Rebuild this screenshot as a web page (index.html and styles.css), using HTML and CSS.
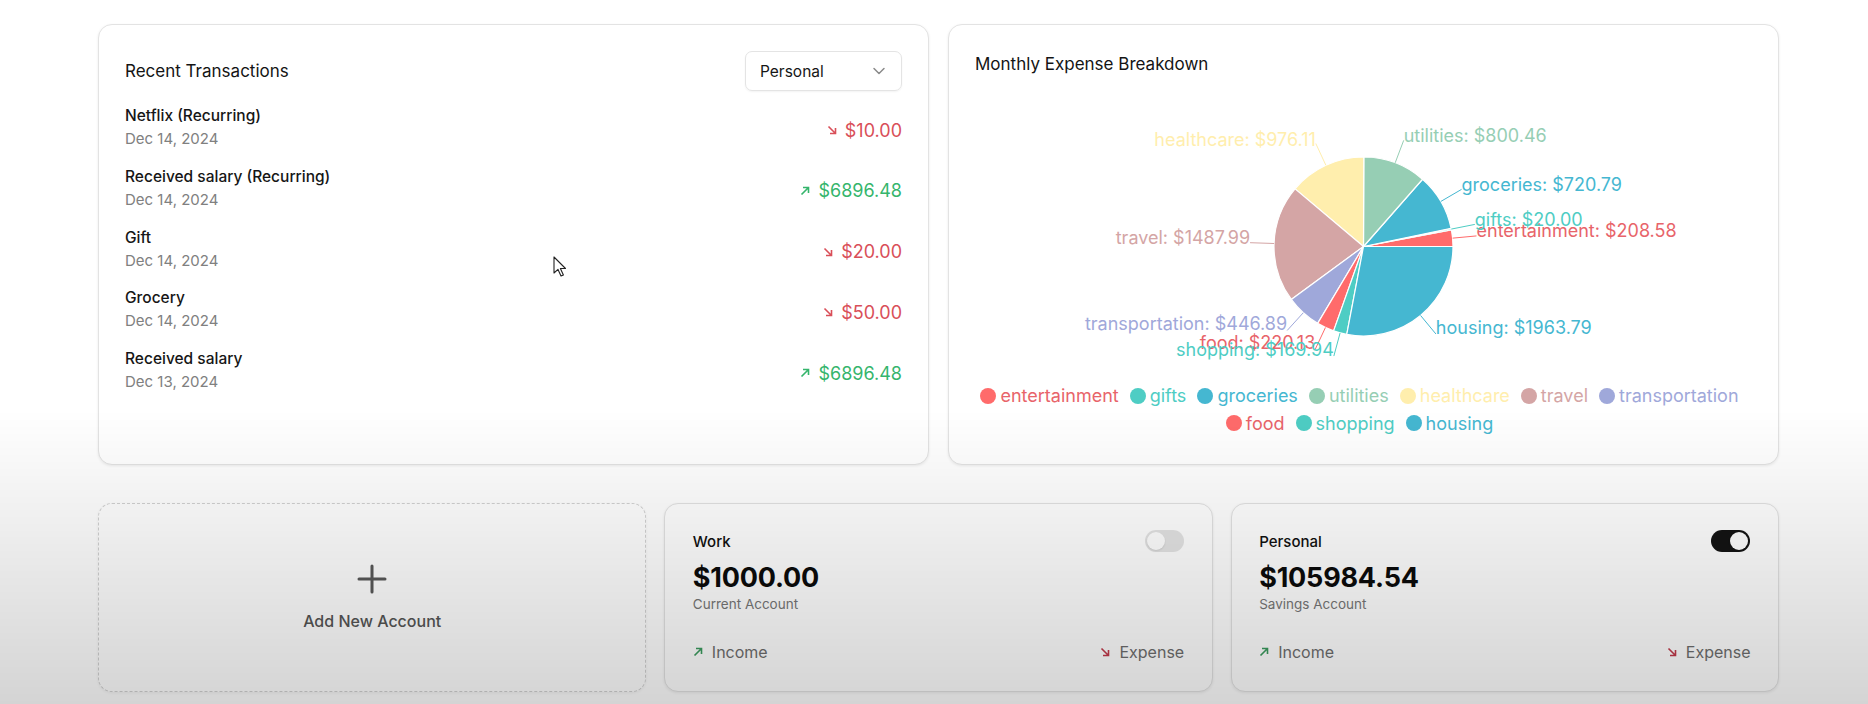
FILE: index.html
```html
<!DOCTYPE html>
<html lang="en">
<head>
<meta charset="utf-8">
<title>Dashboard</title>
<link rel="stylesheet" href="styles.css">
</head>
<body>
<main class="page">
  <section class="top-row">
    <div class="card tx-card">
      <div class="card-head">
        <h2 class="card-title">Recent Transactions</h2>
        <div class="select">
          <span>Personal</span>
          <svg class="chev" width="20" height="20" viewBox="0 0 24 24"><path d="m6 9 6 6 6-6" fill="none" stroke="#8a8a8a" stroke-width="1.8" stroke-linecap="round" stroke-linejoin="round"/></svg>
        </div>
      </div>
      <ul class="tx-list">
        <li class="tx">
          <div class="tx-info"><div class="tx-name">Netflix (Recurring)</div><div class="tx-date">Dec 14, 2024</div></div>
          <div class="tx-amt neg"><svg class="arr" viewBox="0 0 10 10"><path d="M1.5 1.5 8.5 8.5M8.5 3v5.5H3"/></svg>$10.00</div>
        </li>
        <li class="tx">
          <div class="tx-info"><div class="tx-name">Received salary (Recurring)</div><div class="tx-date">Dec 14, 2024</div></div>
          <div class="tx-amt pos"><svg class="arr" viewBox="0 0 10 10"><path d="M1.5 8.5 8.5 1.5M3 1.5h5.5V7"/></svg>$6896.48</div>
        </li>
        <li class="tx">
          <div class="tx-info"><div class="tx-name">Gift</div><div class="tx-date">Dec 14, 2024</div></div>
          <div class="tx-amt neg"><svg class="arr" viewBox="0 0 10 10"><path d="M1.5 1.5 8.5 8.5M8.5 3v5.5H3"/></svg>$20.00</div>
        </li>
        <li class="tx">
          <div class="tx-info"><div class="tx-name">Grocery</div><div class="tx-date">Dec 14, 2024</div></div>
          <div class="tx-amt neg"><svg class="arr" viewBox="0 0 10 10"><path d="M1.5 1.5 8.5 8.5M8.5 3v5.5H3"/></svg>$50.00</div>
        </li>
        <li class="tx">
          <div class="tx-info"><div class="tx-name">Received salary</div><div class="tx-date">Dec 13, 2024</div></div>
          <div class="tx-amt pos"><svg class="arr" viewBox="0 0 10 10"><path d="M1.5 8.5 8.5 1.5M3 1.5h5.5V7"/></svg>$6896.48</div>
        </li>
      </ul>
    </div>

    <div class="card chart-card">
      <h2 class="card-title">Monthly Expense Breakdown</h2>
      <svg class="pie" viewBox="0 0 777 294" width="777" height="294">
        <g transform="translate(388.5,158.5)" stroke="#fff" stroke-width="1.2">
          <path fill="#FF6B6B" d="M0 0L89.5 0A89.5 89.5 0 0 0 87.94 -16.62Z"/>
          <path fill="#4ECDC4" d="M0 0L87.94 -16.62A89.5 89.5 0 0 0 87.63 -18.20Z"/>
          <path fill="#45B7D1" d="M0 0L87.63 -18.20A89.5 89.5 0 0 0 59.04 -67.26Z"/>
          <path fill="#96CEB4" d="M0 0L59.04 -67.26A89.5 89.5 0 0 0 0.31 -89.5Z"/>
          <path fill="#FFEEAD" d="M0 0L0.31 -89.5A89.5 89.5 0 0 0 -68.46 -57.65Z"/>
          <path fill="#D4A5A5" d="M0 0L-68.46 -57.65A89.5 89.5 0 0 0 -72.17 52.94Z"/>
          <path fill="#9FA8DA" d="M0 0L-72.17 52.94A89.5 89.5 0 0 0 -45.83 76.88Z"/>
          <path fill="#FF6B6B" d="M0 0L-45.83 76.88A89.5 89.5 0 0 0 -29.88 84.36Z"/>
          <path fill="#4ECDC4" d="M0 0L-29.88 84.36A89.5 89.5 0 0 0 -16.75 87.92Z"/>
          <path fill="#45B7D1" d="M0 0L-16.75 87.92A89.5 89.5 0 0 0 89.5 0Z"/>
        </g>
        <g transform="translate(388.5,158.5)" class="labels">
          <line x1="89.11" y1="-8.35" x2="113" y2="-10.59" stroke="#FF6B6B"/>
          <line x1="87.79" y1="-17.41" x2="111.33" y2="-22.08" stroke="#4ECDC4"/>
          <line x1="77.33" y1="-45.06" x2="98.07" y2="-57.14" stroke="#45B7D1"/>
          <line x1="31.69" y1="-83.70" x2="40.19" y2="-106.15" stroke="#96CEB4"/>
          <line x1="-37.61" y1="-81.21" x2="-47.70" y2="-102.99" stroke="#FFEEAD"/>
          <line x1="-89.45" y1="-3.00" x2="-113.44" y2="-3.80" stroke="#D4A5A5"/>
          <line x1="-60.20" y1="66.23" x2="-76.34" y2="83.99" stroke="#9FA8DA"/>
          <line x1="-38.04" y1="81.01" x2="-48.24" y2="102.74" stroke="#FF6B6B"/>
          <line x1="-23.38" y1="86.39" x2="-29.65" y2="109.56" stroke="#4ECDC4"/>
          <line x1="57.06" y1="68.95" x2="72.36" y2="87.45" stroke="#45B7D1"/>
          <text x="113" y="-9.59" fill="#e8646a">entertainment: $208.58</text>
          <text x="111.33" y="-20.58" fill="#4ECDC4">gifts: $20.00</text>
          <text x="98.07" y="-55.14" fill="#45B7D1">groceries: $720.79</text>
          <text x="40.19" y="-104.15" fill="#96CEB4">utilities: $800.46</text>
          <text x="-47.70" y="-100.99" fill="#FFEEAD" text-anchor="end">healthcare: $976.11</text>
          <text x="-113.44" y="-2.30" fill="#D4A5A5" text-anchor="end">travel: $1487.99</text>
          <text x="-76.34" y="83.99" fill="#9FA8DA" text-anchor="end">transportation: $446.89</text>
          <text x="-48.24" y="102.74" fill="#e8646a" text-anchor="end">food: $220.13</text>
          <text x="-29.65" y="109.56" fill="#4ECDC4" text-anchor="end">shopping: $169.94</text>
          <text x="72.36" y="87.45" fill="#45B7D1">housing: $1963.79</text>
        </g>
      </svg>
      <ul class="legend">
        <li class="c-red"><i></i>entertainment</li>
        <li class="c-teal"><i></i>gifts</li>
        <li class="c-blue"><i></i>groceries</li>
        <li class="c-sage"><i></i>utilities</li>
        <li class="c-yellow"><i></i>healthcare</li>
        <li class="c-rose"><i></i>travel</li>
        <li class="c-lav"><i></i>transportation</li>
        <li class="c-red"><i></i>food</li>
        <li class="c-teal"><i></i>shopping</li>
        <li class="c-blue"><i></i>housing</li>
      </ul>
    </div>
  </section>

  <section class="accounts">
    <div class="card add-card">
      <svg class="plus" width="30" height="30" viewBox="0 0 30 30"><path d="M15 2v26M2 15h26" stroke="#595959" stroke-width="3" stroke-linecap="round"/></svg>
      <span class="add-text">Add New Account</span>
    </div>

    <div class="card acct">
      <div class="acct-head">
        <span class="acct-name">Work</span>
        <span class="toggle off"><span class="knob"></span></span>
      </div>
      <div class="acct-bal">$1000.00</div>
      <div class="acct-type">Current Account</div>
      <div class="acct-foot">
        <span class="flow"><svg class="arr inc" viewBox="0 0 10 10"><path d="M1.5 8.5 8.5 1.5M3 1.5h5.5V7"/></svg>Income</span>
        <span class="flow"><svg class="arr exp" viewBox="0 0 10 10"><path d="M1.5 1.5 8.5 8.5M8.5 3v5.5H3"/></svg>Expense</span>
      </div>
    </div>

    <div class="card acct">
      <div class="acct-head">
        <span class="acct-name">Personal</span>
        <span class="toggle on"><span class="knob"></span></span>
      </div>
      <div class="acct-bal">$105984.54</div>
      <div class="acct-type">Savings Account</div>
      <div class="acct-foot">
        <span class="flow"><svg class="arr inc" viewBox="0 0 10 10"><path d="M1.5 8.5 8.5 1.5M3 1.5h5.5V7"/></svg>Income</span>
        <span class="flow"><svg class="arr exp" viewBox="0 0 10 10"><path d="M1.5 1.5 8.5 8.5M8.5 3v5.5H3"/></svg>Expense</span>
      </div>
    </div>
  </section>
</main>
<div class="fade"></div>
<svg class="cursor" width="14" height="22" viewBox="0 0 14 22"><path d="M1 1v16l4-3.6 3 6.6 2.4-1.1-3-6.4H12.5Z" fill="#fff" stroke="#222" stroke-width="1.1" stroke-linejoin="round"/></svg>
</body>
</html>
```

FILE: styles.css
```css
* { box-sizing: border-box; }

body {
  margin: 0;
  background: #fff;
  font-family: Inter, "Noto Sans", sans-serif;
  color: #111;
  width: 1868px;
  height: 704px;
  overflow: hidden;
}

.page {
  padding: 24px 89px 0 98px;
}

.top-row {
  display: grid;
  grid-template-columns: 1fr 1fr;
  gap: 19px;
  height: 441px;
}

.card {
  background: #fff;
  border: 1px solid #e3e3e3;
  border-radius: 14px;
  box-shadow: 0 1px 3px rgba(0, 0, 0, 0.08);
}

.card-title {
  margin: 0;
  font-size: 17px;
  font-weight: 400;
  line-height: 26px;
  color: #141414;
}

/* Transactions */
.tx-card {
  padding: 26px;
}

.card-head {
  display: flex;
  justify-content: space-between;
  align-items: center;
}

.select {
  width: 157px;
  height: 40px;
  border: 1px solid #e4e4e4;
  border-radius: 7px;
  box-shadow: 0 1px 2px rgba(0, 0, 0, 0.05);
  display: flex;
  align-items: center;
  justify-content: space-between;
  padding: 0 12px 0 14px;
  font-size: 15.5px;
  color: #161616;
}

.chev { display: block; }

.tx-list {
  list-style: none;
  margin: 13px 0 0;
  padding: 0;
  display: flex;
  flex-direction: column;
  gap: 13.8px;
}

.tx {
  display: flex;
  justify-content: space-between;
  align-items: center;
}

.tx-name {
  font-size: 15.5px;
  font-weight: 500;
  line-height: 23px;
  color: #161616;
}

.tx-date {
  font-size: 15px;
  line-height: 24px;
  color: #808080;
}

.tx-amt {
  display: flex;
  align-items: center;
  gap: 8px;
  font-size: 18px;
  padding-top: 5px;
}

.tx-amt.neg { color: #d94f59; }
.tx-amt.pos { color: #35b56c; }

.arr {
  width: 10px;
  height: 10px;
  display: block;
  fill: none;
  stroke: currentColor;
  stroke-width: 1.6;
}

/* Chart */
.chart-card {
  padding: 26px;
}

.pie {
  display: block;
  margin-top: 11px;
  width: 777px;
  height: 294px;
}

.labels line { stroke-width: 1; }

.labels text {
  font-family: Inter, "Noto Sans", sans-serif;
  font-size: 18px;
}

.legend {
  list-style: none;
  margin: 0 0 0 -8px;
  padding: 0;
  display: flex;
  flex-wrap: wrap;
  justify-content: center;
  font-size: 18px;
  line-height: 27.5px;
}

.legend li {
  display: flex;
  align-items: center;
  margin-right: 11px;
}

.legend li:nth-child(7) { margin-right: 0; }
.legend li:nth-child(10) { margin-right: 0; }

.legend i {
  width: 16px;
  height: 16px;
  border-radius: 50%;
  margin-right: 4px;
  background: currentColor;
}

.c-red { color: #e8646a; }
.c-red i { background: #FF6B6B; }
.c-teal { color: #4ECDC4; }
.c-blue { color: #45B7D1; }
.c-sage { color: #96CEB4; }
.c-yellow { color: #FFEEAD; }
.c-rose { color: #D4A5A5; }
.c-lav { color: #9FA8DA; }

/* Accounts */
.accounts {
  display: grid;
  grid-template-columns: repeat(3, 1fr);
  gap: 18px;
  margin-top: 38px;
  height: 189px;
}

.add-card {
  border: 1px dashed #d2d2d2;
  box-shadow: 0 1px 3px rgba(0, 0, 0, 0.06);
  display: flex;
  flex-direction: column;
  align-items: center;
  justify-content: center;
  gap: 16px;
}

.plus { display: block; }

.add-text {
  font-size: 16px;
  font-weight: 500;
  line-height: 22px;
  color: #565656;
}

.acct {
  padding: 26px 27.5px 28px;
  display: flex;
  flex-direction: column;
}

.acct-head {
  display: flex;
  justify-content: space-between;
  align-items: center;
  height: 22px;
}

.acct-name {
  font-size: 15px;
  font-weight: 500;
  color: #111;
}

.toggle {
  width: 39px;
  height: 22px;
  border-radius: 11px;
  padding: 2px;
  display: flex;
}

.toggle .knob {
  width: 18px;
  height: 18px;
  border-radius: 50%;
  background: #fff;
  box-shadow: 0 1px 2px rgba(0, 0, 0, 0.15);
}

.toggle.on {
  background: #141414;
  justify-content: flex-end;
}

.toggle.off {
  background: #dadada;
  opacity: 0.7;
}

.acct-bal {
  margin-top: 9px;
  font-size: 27px;
  font-weight: 700;
  line-height: 34px;
  color: #0c0c0c;
  letter-spacing: -0.2px;
}

.acct-type {
  font-size: 13.5px;
  line-height: 18px;
  color: #777;
}

.acct-foot {
  margin-top: auto;
  display: flex;
  justify-content: space-between;
  align-items: center;
  line-height: 22px;
}

.flow {
  display: flex;
  align-items: center;
  gap: 9px;
  font-size: 16px;
  color: #6e6e6e;
}

.arr.inc { color: #3c9c5f; }
.arr.exp { color: #c23a4b; }

/* screen recording fade + pointer */
.fade {
  position: fixed;
  inset: 0;
  pointer-events: none;
  background: linear-gradient(to bottom,
    rgba(0, 0, 0, 0) 0px,
    rgba(0, 0, 0, 0) 410px,
    rgba(0, 0, 0, 0.05) 500px,
    rgba(0, 0, 0, 0.17) 704px);
}

.cursor {
  position: absolute;
  left: 553px;
  top: 256px;
}
```
